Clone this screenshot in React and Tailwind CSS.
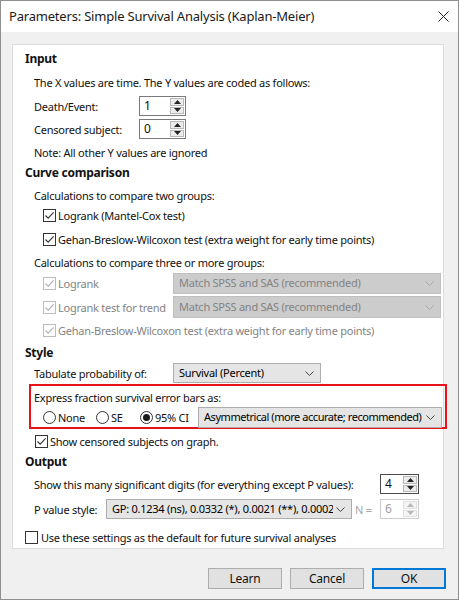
import React from 'react';

const Check = ({ checked = true, disabled = false }) => (
  <span
    className={`w-[13px] h-[13px] shrink-0 border bg-white flex items-center justify-center ${
      disabled ? 'border-[#bcbcbc]' : 'border-[#333333]'
    }`}
  >
    {checked && (
      <svg width="11" height="11" viewBox="0 0 11 11">
        <path
          d="M1.5 5.5 L4.2 8.2 L9.6 2.4"
          fill="none"
          stroke={disabled ? '#b0b0b0' : '#333333'}
          strokeWidth="1.1"
        />
      </svg>
    )}
  </span>
);

const Radio = ({ checked = false }) => (
  <span className="w-[13px] h-[13px] shrink-0 rounded-full border border-[#333333] bg-white flex items-center justify-center">
    {checked && <span className="w-[7px] h-[7px] rounded-full bg-[#1a1a1a]" />}
  </span>
);

const Chevron = ({ disabled = false }) => (
  <svg width="9" height="5" viewBox="0 0 9 5" className="shrink-0 ml-[3px]">
    <polyline
      points="0.5,0.5 4.5,4.5 8.5,0.5"
      fill="none"
      stroke={disabled ? '#a8a8a8' : '#444444'}
      strokeWidth="1"
    />
  </svg>
);

const Spin = ({ value, focused = false, disabled = false }) => (
  <div
    className={`h-full flex border ${
      focused ? 'border-[#4a4a4a]' : disabled ? 'border-[#cccccc]' : 'border-[#7a7a7a]'
    } bg-white`}
  >
    <div className={`flex-1 flex items-center pl-[4px] text-[12px] ${disabled ? 'text-[#a0a0a0]' : ''}`}>{value}</div>
    <div className="w-[15px] flex flex-col gap-[1px] p-[1px] pl-0">
      <div className={`flex-1 flex items-center justify-center border ${disabled ? 'border-[#e0e0e0] bg-[#f4f4f4]' : 'border-[#b8b8b8] bg-[#ececec]'}`}>
        <svg width="7" height="4" viewBox="0 0 7 4">
          <polygon points="0,4 3.5,0 7,4" fill={disabled ? '#b8b8b8' : '#222222'} />
        </svg>
      </div>
      <div className={`flex-1 flex items-center justify-center border ${disabled ? 'border-[#e0e0e0] bg-[#f4f4f4]' : 'border-[#b8b8b8] bg-[#ececec]'}`}>
        <svg width="7" height="4" viewBox="0 0 7 4">
          <polygon points="0,0 7,0 3.5,4" fill={disabled ? '#b8b8b8' : '#222222'} />
        </svg>
      </div>
    </div>
  </div>
);

const Select = ({ text, disabled = false, textClass = '' }) => (
  <div
    className={`h-full flex items-center pl-[5px] pr-[6px] border ${
      disabled ? 'bg-[#cccccc] border-[#bfbfbf] text-[#838383]' : 'bg-[#e5e5e5] border-[#adadad] text-black'
    }`}
  >
    <span className={`flex-1 min-w-0 overflow-hidden whitespace-nowrap leading-[16px] ${textClass}`}>{text}</span>
    <Chevron disabled={disabled} />
  </div>
);

export default function App() {
  return (
    <div className="w-[459px] h-[600px] bg-[#f0f0f0] border border-[#8f8f8f] flex flex-col text-[11px] tracking-[-0.25px] leading-none text-[#111111] font-['Noto_Sans',sans-serif]">
      {/* title bar */}
      <div className="h-[31px] bg-white flex items-center justify-between pl-[8px] pr-[9px] shrink-0">
        <span className="text-[13px] text-[#1a1a1a] tracking-[-0.2px]">Parameters: Simple Survival Analysis (Kaplan-Meier)</span>
        <svg width="11" height="11" viewBox="0 0 11 11">
          <path d="M0.5 0.5 L10.5 10.5 M10.5 0.5 L0.5 10.5" stroke="#222222" strokeWidth="1" />
        </svg>
      </div>

      <div className="mt-[12px] ml-[11px] w-[432px] bg-white border border-[#dcdcdc] pl-[12px] pr-[2px] pb-[1px] flex flex-col">
        <div className="mt-[4px] h-[20px] flex items-center font-bold text-[12px]">Input</div>
        <div className="mt-[3px] h-[20px] flex items-center pl-[9px]">
          The X values are time. The Y values are coded as follows:
        </div>
        <div className="mt-[4px] h-[20px] flex items-center pl-[9px]">
          <span className="w-[105px]">Death/Event:</span>
          <div className="w-[47px] h-[20px]"><Spin value="1" /></div>
        </div>
        <div className="mt-[3px] h-[20px] flex items-center pl-[9px]">
          <span className="w-[105px]">Censored subject:</span>
          <div className="w-[47px] h-[20px]"><Spin value="0" /></div>
        </div>
        <div className="mt-[3px] h-[20px] flex items-center pl-[9px]">Note: All other Y values are ignored</div>

        <div className="mt-[1px] h-[20px] flex items-center font-bold text-[12px]">Curve comparison</div>
        <div className="mt-[2px] h-[20px] flex items-center pl-[9px]">Calculations to compare two groups:</div>
        <div className="h-[20px] flex items-center pl-[18px] gap-[2px]">
          <Check />
          <span>Logrank (Mantel-Cox test)</span>
        </div>
        <div className="mt-[4px] h-[20px] flex items-center pl-[18px] gap-[2px]">
          <Check />
          <span>Gehan-Breslow-Wilcoxon test (extra weight for early time points)</span>
        </div>
        <div className="mt-[3px] h-[20px] flex items-center pl-[9px]">Calculations to compare three or more groups:</div>
        <div className="h-[22px] flex items-center pl-[18px] text-[#838383]">
          <div className="w-[130px] shrink-0 flex items-center gap-[2px]">
            <Check disabled />
            <span>Logrank</span>
          </div>
          <div className="w-[270px] h-[21px]"><Select text="Match SPSS and SAS (recommended)" disabled /></div>
        </div>
        <div className="mt-[2px] h-[22px] flex items-center pl-[18px] text-[#838383]">
          <div className="w-[130px] shrink-0 flex items-center gap-[2px]">
            <Check disabled />
            <span className="whitespace-nowrap">Logrank test for trend</span>
          </div>
          <div className="w-[270px] h-[22px]"><Select text="Match SPSS and SAS (recommended)" disabled /></div>
        </div>
        <div className="mt-[2px] h-[20px] flex items-center pl-[18px] gap-[2px] text-[#838383]">
          <Check disabled />
          <span>Gehan-Breslow-Wilcoxon test (extra weight for early time points)</span>
        </div>

        <div className="mt-[3px] h-[20px] flex items-center font-bold text-[12px]">Style</div>
        <div className="h-[20px] flex items-center pl-[9px]">
          <span className="w-[139px] shrink-0">Tabulate probability of:</span>
          <div className="w-[148px] h-[20px]"><Select text="Survival (Percent)" /></div>
        </div>
        <div className="mt-[1px] h-[45px] ml-[4px] -mr-[6px] border-2 border-[#e8131b] pl-[3px] pt-[1px] flex flex-col">
          <div className="h-[20px] flex items-center">Express fraction survival error bars as:</div>
          <div className="h-[20px] flex items-center">
            <div className="w-[62px] shrink-0 pl-[9px] flex items-center gap-[2px]">
              <Radio />
              <span>None</span>
            </div>
            <div className="w-[44px] shrink-0 flex items-center gap-[2px]">
              <Radio />
              <span>SE</span>
            </div>
            <div className="w-[58px] shrink-0 flex items-center gap-[2px]">
              <Radio checked />
              <span className="whitespace-nowrap">95% CI</span>
            </div>
            <div className="w-[244px] h-[21px]">
              <Select text="Asymmetrical (more accurate; recommended)" textClass="tracking-[-0.45px]" />
            </div>
          </div>
        </div>
        <div className="mt-[2px] h-[20px] flex items-center pl-[10px] gap-[2px]">
          <Check />
          <span>Show censored subjects on graph.</span>
        </div>

        <div className="mt-[1px] h-[20px] flex items-center font-bold text-[12px]">Output</div>
        <div className="mt-[2px] h-[20px] flex items-center pl-[9px]">
          <span className="w-[346px] shrink-0 whitespace-nowrap">Show this many significant digits (for everything except P values):</span>
          <div className="w-[39px] h-[20px]"><Spin value="4" focused /></div>
        </div>
        <div className="mt-[5px] h-[20px] flex items-center pl-[9px]">
          <span className="w-[72px] shrink-0 whitespace-nowrap">P value style:</span>
          <div className="w-[246px] shrink-0 h-[20px]">
            <Select text="GP: 0.1234 (ns), 0.0332 (*), 0.0021 (**), 0.0002 (***)" />
          </div>
          <span className="w-[28px] shrink-0 pl-[3px] text-[#a6a6a6] whitespace-nowrap">N =</span>
          <div className="w-[39px] h-[20px]"><Spin value="6" disabled /></div>
        </div>
        <div className="mt-[8px] h-[20px] flex items-center gap-[3px]">
          <Check checked={false} />
          <span>Use these settings as the default for future survival analyses</span>
        </div>
      </div>

      <div className="mt-[19px] mr-[12px] flex justify-end gap-[8px] text-[12px] tracking-[-0.2px]">
        <button className="w-[74px] h-[21px] bg-[#e1e1e1] border border-[#adadad] flex items-center justify-center">Learn</button>
        <button className="w-[74px] h-[21px] bg-[#e1e1e1] border border-[#adadad] flex items-center justify-center">Cancel</button>
        <button className="w-[74px] h-[21px] bg-[#e1e1e1] border border-[#0078d7] shadow-[inset_0_0_0_1px_#0078d7] flex items-center justify-center">OK</button>
      </div>
    </div>
  );
}
